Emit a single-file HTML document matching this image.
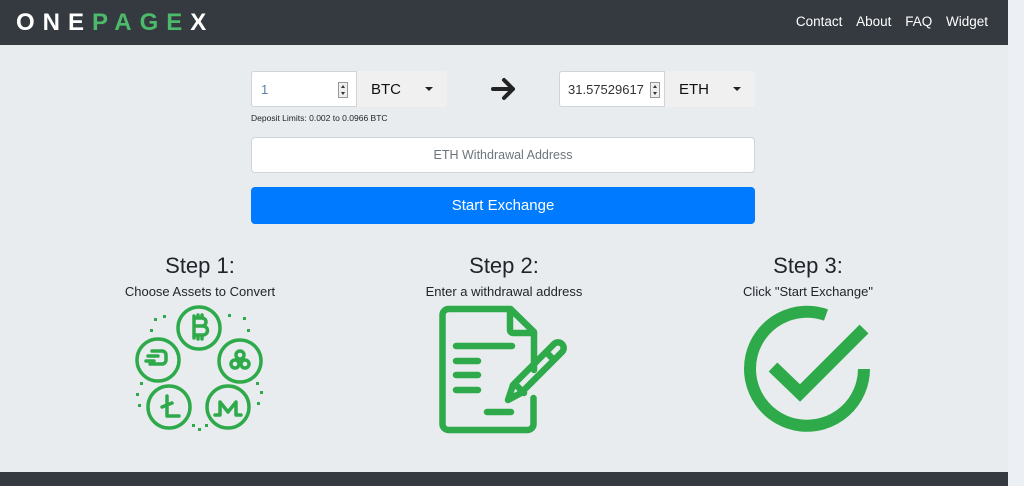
<!DOCTYPE html>
<html><head><style>
*{margin:0;padding:0;box-sizing:border-box}
body{width:1024px;height:486px;background:#eceff3;font-family:"Liberation Sans",sans-serif;position:relative;overflow:hidden;color:#212529}
.main{position:absolute;left:0;top:0;width:1008px;height:486px;background:#e9ecef}
nav{position:absolute;left:0;top:0;width:1008px;height:45px;background:#343a40}
.logo{position:absolute;left:16px;top:9px;font-size:24px;font-weight:bold;letter-spacing:8px;color:#fff}
.logo span{color:#4cba6a}
.links{position:absolute;right:20px;top:14px;font-size:13.5px;color:#fff}
.links a{margin-left:10px}
footer{position:absolute;left:0;top:472px;width:1008px;height:14px;background:#343a40}
.abs{position:absolute}
.inp{background:#fff;border:1px solid #ced4da;border-radius:3px 0 0 3px;font-size:13px}
.sel{background:#f0f0f0;border-radius:0 3px 3px 0;font-size:15px;color:#111}
.spin{position:absolute;right:8px;top:10px;width:10px;height:16px;border:1px solid #999;background:#eee}
.spin:before{content:"";position:absolute;left:2px;top:2px;border:2.5px solid transparent;border-bottom:3px solid #333;border-top:0}
.spin:after{content:"";position:absolute;left:2px;bottom:2px;border:2.5px solid transparent;border-top:3px solid #333;border-bottom:0}
.caret{position:absolute;right:14px;top:16px;border:4px solid transparent;border-top:4px solid #222;border-bottom:0}
.step{position:absolute;width:300px;text-align:center}
.step h2{font-weight:normal;font-size:22px;margin-top:0}
.step p{font-size:13px;margin-top:5px}
</style></head><body>
<div class="main"></div>
<nav><div class="logo">ONE<span>PAGE</span>X</div>
<div class="links"><a>Contact</a> <a>About</a> <a>FAQ</a> <a>Widget</a></div></nav>

<div class="abs inp" style="left:251px;top:71px;width:106px;height:36px;"><span class="abs" style="left:9px;top:10px;color:#5a7fa8">1</span><div class="spin"></div></div>
<div class="abs sel" style="left:357px;top:71px;width:90px;height:36px;"><span class="abs" style="left:14px;top:10px">BTC</span><div class="caret"></div></div>
<div class="abs" style="left:251px;top:113px;font-size:8.5px">Deposit Limits: 0.002 to 0.0966 BTC</div>
<svg class="abs" style="left:490px;top:76px" width="28" height="26" viewBox="0 0 28 26"><path d="M3 13H23M14 4L23 13L14 22" stroke="#222" stroke-width="4" fill="none" stroke-linecap="round" stroke-linejoin="round"/></svg>
<div class="abs inp" style="left:559px;top:71px;width:106px;height:36px;"><span class="abs" style="left:8px;top:10px;color:#333">31.57529617</span><div class="spin" style="right:4px"></div></div>
<div class="abs sel" style="left:665px;top:71px;width:90px;height:36px;"><span class="abs" style="left:14px;top:10px">ETH</span><div class="caret"></div></div>

<div class="abs" style="left:251px;top:137px;width:504px;height:36px;background:#fff;border:1px solid #ced4da;border-radius:4px;text-align:center;line-height:34px;font-size:12.5px;color:#6c757d">ETH Withdrawal Address</div>
<div class="abs" style="left:251px;top:187px;width:504px;height:37px;background:#007bff;border-radius:4px;text-align:center;line-height:38px;font-size:15px;color:#fff">Start Exchange</div>

<div class="step" style="left:50px;top:253px"><h2>Step 1:</h2><p>Choose Assets to Convert</p></div>
<div class="step" style="left:354px;top:253px"><h2>Step 2:</h2><p>Enter a withdrawal address</p></div>
<div class="step" style="left:658px;top:253px"><h2>Step 3:</h2><p>Click "Start Exchange"</p></div>

<svg class="abs" style="left:0;top:0" width="1008" height="486">
<g stroke="#2eaa4a" stroke-width="3.5" fill="none" stroke-linecap="round" stroke-linejoin="round">
<circle cx="199" cy="328" r="21"/><circle cx="158" cy="360" r="21"/><circle cx="240" cy="361" r="21"/><circle cx="169" cy="407" r="21"/><circle cx="228" cy="407" r="21"/>
<path d="M194 318h8a4 4 0 0 1 0 8h-8zM194 326h9a4 4 0 0 1 0 9h-9zM194 316v22M198 315v3M202 315v3M198 336v3M202 336v3"/>
<path d="M148 356h10M146 361h8M152 351h10a4 4 0 0 1 4 4v5a4 4 0 0 1-4 4h-12"/>
<circle cx="240" cy="355" r="4"/><circle cx="235" cy="364" r="4"/><circle cx="245" cy="364" r="4"/>
<path d="M167 396v20h12M162 407l10-4"/>
<path d="M215 415h5v-13l8 10 8-10v13h5"/>
</g>
<g fill="#2eaa4a"><rect x="154" y="318" width="3" height="3"/><rect x="163" y="315" width="3" height="3"/><rect x="150" y="329" width="3" height="3"/><rect x="228" y="314" width="3" height="3"/><rect x="243" y="317" width="3" height="3"/><rect x="247" y="329" width="3" height="3"/><rect x="140" y="382" width="3" height="3"/><rect x="136" y="393" width="3" height="3"/><rect x="138" y="404" width="3" height="3"/><rect x="256" y="382" width="3" height="3"/><rect x="260" y="391" width="3" height="3"/><rect x="257" y="402" width="3" height="3"/><rect x="192" y="424" width="3" height="3"/><rect x="198" y="428" width="3" height="3"/><rect x="205" y="424" width="3" height="3"/></g>
<g stroke="#2eaa4a" stroke-width="6.5" fill="none" stroke-linecap="round" stroke-linejoin="round">
<path d="M533.5 398v26a6 6 0 0 1-6 6h-79a6 6 0 0 1-6-6v-109a6 6 0 0 1 6-6h62l23.5 23v38"/>
<path d="M510 310v20a3 3 0 0 0 3 3h20"/>
<path d="M456 346h56M456 361h22M456 375h22M456 390h22M487 412h24"/>
<path d="M508 400l5-15 41-41a5 5 0 0 1 8 8l-41 41zM517 386l7 7M546 352l7 7"/>
</g>
<path d="M826 315A57 57 0 1 0 864 369" stroke="#2eaa4a" stroke-width="12" fill="none"/>
<path d="M773 367l27 26 64-64" stroke="#2eaa4a" stroke-width="12.5" fill="none"/>
</svg>
<footer></footer>
</body></html>
